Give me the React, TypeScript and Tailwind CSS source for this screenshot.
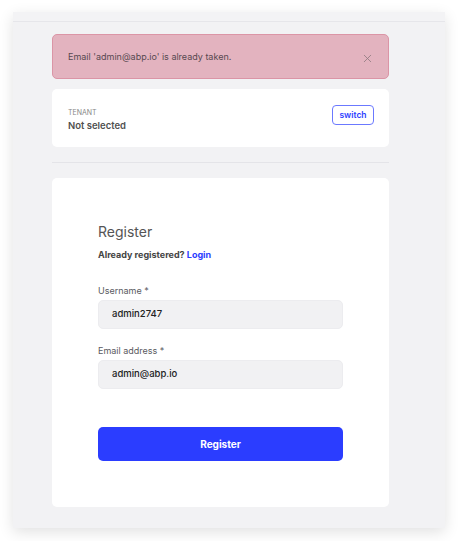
import React from "react";
import { X } from "lucide-react";

const Field = ({ label, value }: { label: string; value: string }) => (
  <div className="flex flex-col">
    <label className="text-[9px] text-[#5a5a61] leading-[12px] mb-[3px]">{label}</label>
    <div className="h-[29px] w-[245px] rounded-[5px] bg-[#f1f1f3] border border-[#ececef] flex items-center pl-[13px] text-[9.5px] font-medium text-[#222]">
      {value}
    </div>
  </div>
);

const App = () => {
  return (
    <div
      className="w-[458px] h-[541px] bg-white pt-[12px] pl-[13px]"
      style={{ fontFamily: "Inter, 'Noto Sans', sans-serif" }}
    >
      <div className="w-[432px] h-[516px] bg-[#f2f2f4] shadow-[0_4px_14px_rgba(0,0,0,0.12)] flex flex-col">
        <div className="h-[10px] border-b border-[#e6e6ea] bg-[#f3f3f5]" />
        <div className="pl-[39px] pt-[12px] w-[376px] flex flex-col">
          {/* Alert */}
          <div className="h-[45px] rounded-[5px] bg-[#e3b3bf] border border-[#db95a6] flex items-center justify-between pl-[15px] pr-[14px]">
            <span className="text-[9px] text-[#574950]">
              Email 'admin@abp.io' is already taken.
            </span>
            <X className="w-[13px] h-[13px] text-[#8f7a80] mt-[3px]" strokeWidth={1.5} />
          </div>

          {/* Tenant */}
          <div className="mt-[10px] h-[58px] rounded-[5px] bg-white flex items-center justify-between pl-[16px] pr-[15px]">
            <div className="flex flex-col mt-[3px]">
              <span className="text-[7px] text-[#888] uppercase leading-[10px]">Tenant</span>
              <span className="text-[9.5px] font-semibold text-[#505050] leading-[13px] mt-[1px]">
                Not selected
              </span>
            </div>
            <button className="-mt-[6px] h-[20px] w-[42px] rounded-[4px] border border-[#6b79ff] text-[#2b3dff] text-[8.5px] font-semibold bg-white">
              switch
            </button>
          </div>

          <div className="mt-[15px] border-t border-[#e4e4e8]" />

          {/* Register card */}
          <div className="mt-[15px] h-[329px] rounded-[5px] bg-white flex flex-col pl-[46px] pt-[44px]">
            <h1 className="text-[14px] text-[#555] leading-[20px]">Register</h1>
            <p className="mt-[7px] text-[9px] font-bold text-[#444] leading-[12px]">
              Already registered? <span className="text-[#2b3dff]">Login</span>
            </p>
            <div className="mt-[24px] flex flex-col gap-[16px]">
              <Field label="Username *" value="admin2747" />
              <Field label="Email address *" value="admin@abp.io" />
            </div>
            <button className="mt-[38px] w-[245px] h-[34px] rounded-[5px] bg-[#2b3dff] text-white text-[10px] font-bold">
              Register
            </button>
          </div>
        </div>
      </div>
    </div>
  );
};

export default App;
